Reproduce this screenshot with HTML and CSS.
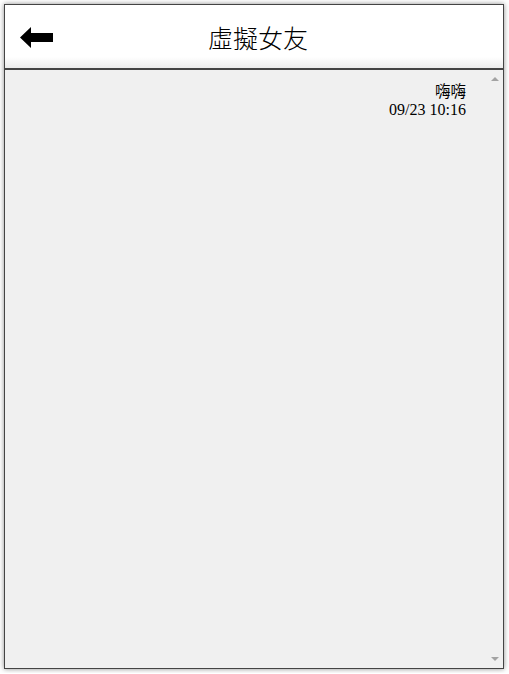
FILE: index.html
```html
<!DOCTYPE html>
<html lang="zh-Hant">
<head>
<meta charset="utf-8">
<title>虛擬女友</title>
<link rel="stylesheet" href="styles.css">
</head>
<body>
<div class="phone">
  <header class="topbar">
    <button class="back" aria-label="返回">
      <svg width="34" height="21" viewBox="0 0 34 21">
        <polygon points="0,10.5 11,0 11,6 33,6 33,15 11,15 11,21" fill="#000"/>
      </svg>
    </button>
    <h1 class="title">虛擬女友</h1>
    <div class="spacer"></div>
  </header>
  <main class="chat">
    <div class="messages">
      <div class="msg">
        <div class="msg-text">嗨嗨</div>
        <div class="msg-time">09/23 10:16</div>
      </div>
    </div>
    <div class="scrollbar">
      <span class="arrow up"></span>
      <span class="arrow down"></span>
    </div>
  </main>
</div>
</body>
</html>
```

FILE: styles.css
```css
html, body {
  margin: 0;
  padding: 0;
  background: #ffffff;
}
body {
  padding: 4px;
  font-family: "Liberation Serif", "Noto Sans CJK TC", serif;
}
.phone {
  width: 500px;
  height: 665px;
  box-sizing: border-box;
  border: 1px solid #444;
  box-shadow: 0 0 5px rgba(0,0,0,0.45);
  display: flex;
  flex-direction: column;
  background: #f0f0f0;
}
.topbar {
  height: 63px;
  flex: none;
  display: flex;
  align-items: center;
  background: linear-gradient(to bottom, #ffffff 0, #ffffff 52px, #ececec 63px);
  border-bottom: 2px solid #444;
}
.back {
  width: 60px;
  height: 100%;
  border: 0;
  padding: 0 0 0 15px;
  background: transparent;
  display: flex;
  align-items: center;
  cursor: pointer;
}
.back svg { display: block; margin-top: 1px; }
.title {
  flex: 1;
  margin: 0;
  text-align: center;
  font-family: "Noto Sans CJK TC", sans-serif;
  font-weight: 300;
  font-size: 25px;
  color: #000;
  line-height: 1;
  margin-top: 1px;
}
.spacer { width: 52px; }
.chat {
  flex: 1;
  display: flex;
  min-height: 0;
}
.messages {
  flex: 1;
  padding: 10px 20px 0 0;
}
.msg {
  display: flex;
  flex-direction: column;
  align-items: flex-end;
  font-size: 16px;
  line-height: 18px;
  color: #000;
}
.msg-text {
  font-family: "Noto Sans CJK TC", sans-serif;
  font-size: 15.5px;
  line-height: 21px;
}
.msg-time {
  line-height: 18px;
}
.scrollbar {
  width: 17px;
  display: flex;
  flex-direction: column;
  justify-content: space-between;
  align-items: center;
  padding: 7px 0 7px;
}
.arrow {
  width: 0;
  height: 0;
  border-left: 4px solid transparent;
  border-right: 4px solid transparent;
}
.arrow.up { border-bottom: 4px solid #a3a3a3; }
.arrow.down { border-top: 4px solid #a3a3a3; }
```
